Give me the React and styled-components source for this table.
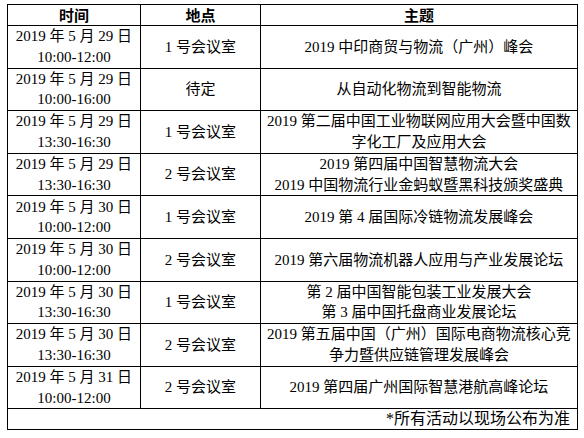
import React from "react";
import styled, { createGlobalStyle } from "styled-components";

const Global = createGlobalStyle`
  html, body { margin: 0; padding: 0; background: #fff; }
  body { font-family: "Liberation Serif", "Noto Sans CJK SC", serif; color: #000; }
`;

const Page = styled.div`
  padding: 4px 0 0 7px;
`;

const Table = styled.table`
  border-collapse: collapse;
  table-layout: fixed;
  width: 570px;
  font-size: 15px;
`;

const HeadCell = styled.th`
  border: 1px solid #000;
  height: 20px;
  padding: 0;
  font-family: "Noto Sans CJK SC", sans-serif;
  font-weight: 700;
  font-size: 15px;
  line-height: 20px;
  text-align: center;
`;

const Row = styled.tr`
  height: 42.6px;
`;

const Cell = styled.td`
  border: 1px solid #000;
  padding: 0 4px;
  text-align: center;
  vertical-align: middle;
  line-height: 20.5px;
  white-space: pre-line;
`;

const NoteCell = styled.td`
  border: 1px solid #000;
  height: 20px;
  padding: 0 7px 0 0;
  text-align: right;
  font-size: 16px;
  line-height: 20px;
`;

const rows = [
  ["2019 年 5 月 29 日\n10:00-12:00", "1 号会议室", "2019 中印商贸与物流（广州）峰会"],
  ["2019 年 5 月 29 日\n10:00-16:00", "待定", "从自动化物流到智能物流"],
  ["2019 年 5 月 29 日\n13:30-16:30", "1 号会议室", "2019 第二届中国工业物联网应用大会暨中国数\n字化工厂及应用大会"],
  ["2019 年 5 月 29 日\n13:30-16:30", "2 号会议室", "2019 第四届中国智慧物流大会\n2019 中国物流行业金蚂蚁暨黑科技颁奖盛典"],
  ["2019 年 5 月 30 日\n10:00-12:00", "1 号会议室", "2019 第 4 届国际冷链物流发展峰会"],
  ["2019 年 5 月 30 日\n10:00-12:00", "2 号会议室", "2019 第六届物流机器人应用与产业发展论坛"],
  ["2019 年 5 月 30 日\n13:30-16:30", "1 号会议室", "第 2 届中国智能包装工业发展大会\n第 3 届中国托盘商业发展论坛"],
  ["2019 年 5 月 30 日\n13:30-16:30", "2 号会议室", "2019 第五届中国（广州）国际电商物流核心竞\n争力暨供应链管理发展峰会"],
  ["2019 年 5 月 31 日\n10:00-12:00", "2 号会议室", "2019 第四届广州国际智慧港航高峰论坛"],
];

export default function App() {
  return (
    <Page>
      <Global />
      <Table>
        <colgroup>
          <col style={{ width: 133 }} />
          <col style={{ width: 120 }} />
          <col style={{ width: 317 }} />
        </colgroup>
        <thead>
          <tr>
            <HeadCell>时间</HeadCell>
            <HeadCell>地点</HeadCell>
            <HeadCell>主题</HeadCell>
          </tr>
        </thead>
        <tbody>
          {rows.map((r, i) => (
            <Row key={i}>
              <Cell>{r[0]}</Cell>
              <Cell>{r[1]}</Cell>
              <Cell>{r[2]}</Cell>
            </Row>
          ))}
          <tr>
            <NoteCell colSpan={3}>*所有活动以现场公布为准</NoteCell>
          </tr>
        </tbody>
      </Table>
    </Page>
  );
}
